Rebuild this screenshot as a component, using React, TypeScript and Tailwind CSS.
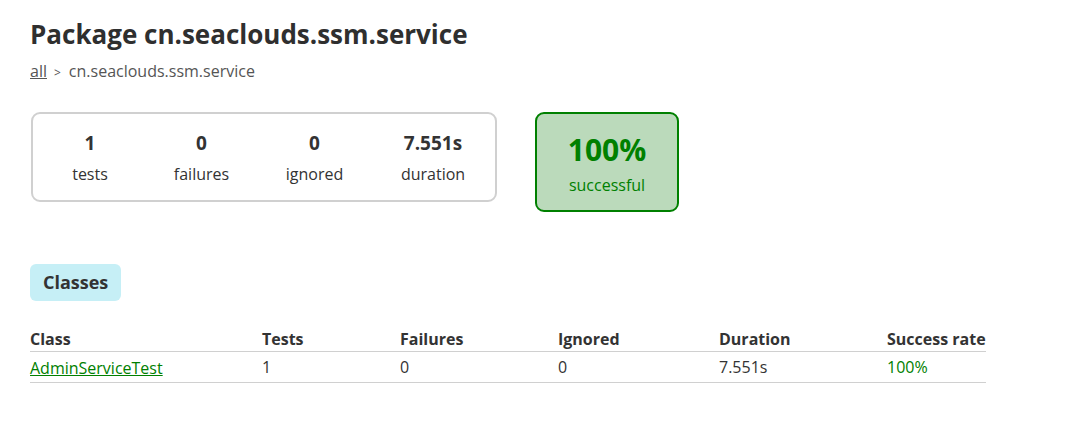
import React from "react";

const font = { fontFamily: '"Open Sans", "Noto Sans", sans-serif' };

function Stat({ value, label }: { value: string; label: string }) {
  return (
    <div className="flex flex-col items-center">
      <div className="text-[19px] font-bold leading-[26px]">{value}</div>
      <div className="mt-[7px] text-[16px] leading-[22px]">{label}</div>
    </div>
  );
}

export default function App() {
  const cols = ["w-[232px]", "w-[138px]", "w-[158px]", "w-[161px]", "w-[168px]", "w-[99px]"];
  const head = ["Class", "Tests", "Failures", "Ignored", "Duration", "Success rate"];
  return (
    <div className="min-h-[429px] bg-white text-[#333] pl-[30px] pt-[16px]" style={font}>
      <h1 className="text-[26px] font-bold leading-[36px] text-[#2f2f2f]">Package cn.seaclouds.ssm.service</h1>
      <div className="mt-[8px] text-[16px] leading-[22px] text-[#555]">
        <a className="underline text-[#555]">all</a>
        <span className="ml-[7px] mr-[8px] text-[12px]">&gt;</span>
        cn.seaclouds.ssm.service
      </div>
      <div className="mt-[28px] flex items-start">
        <div className="ml-[1px] flex h-[90px] w-[466px] items-center rounded-[9px] border-2 border-[#d0d0d0] pt-[1px]">
          <div className="flex w-[112px] justify-center pl-[2px]"><Stat value="1" label="tests" /></div>
          <div className="flex w-[113px] justify-center"><Stat value="0" label="failures" /></div>
          <div className="flex w-[113px] justify-center"><Stat value="0" label="ignored" /></div>
          <div className="flex w-[124px] justify-center"><Stat value="7.551s" label="duration" /></div>
        </div>
        <div className="ml-[38px] flex h-[100px] w-[144px] flex-col items-center justify-center rounded-[9px] border-2 border-[#008000] bg-[#bbdabb] pt-[2px] text-[#008000]">
          <div className="text-[30px] font-bold leading-[38px]">100%</div>
          <div className="mt-[5px] text-[16px] leading-[22px]">successful</div>
        </div>
      </div>
      <div className="mt-[52px] inline-flex h-[37px] items-center rounded-[6px] bg-[#c6eff6] px-[13px] text-[18px] font-bold text-[#333]">
        Classes
      </div>
      <table className="mt-[27px] border-collapse text-[16px]">
        <thead>
          <tr className="border-b border-[#d0d0d0]">
            {head.map((h, i) => (
              <th key={h} className={`${cols[i]} p-0 pb-[1px] text-left font-bold leading-[22px]`}>{h}</th>
            ))}
          </tr>
        </thead>
        <tbody>
          <tr className="border-b border-[#d0d0d0]">
            <td className="p-0 pt-[5px] pb-[3px] leading-[22px]"><a className="text-[#008000] underline">AdminServiceTest</a></td>
            <td className="p-0 leading-[22px]">1</td>
            <td className="p-0 leading-[22px]">0</td>
            <td className="p-0 leading-[22px]">0</td>
            <td className="p-0 leading-[22px]">7.551s</td>
            <td className="p-0 leading-[22px] text-[#008000]">100%</td>
          </tr>
        </tbody>
      </table>
    </div>
  );
}
